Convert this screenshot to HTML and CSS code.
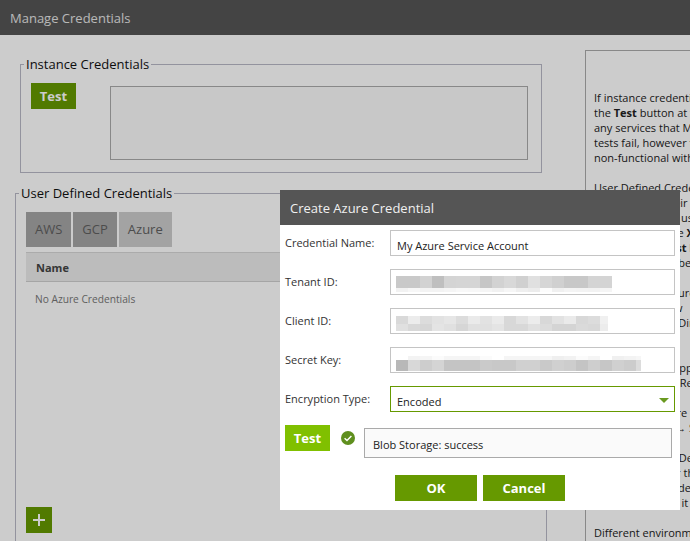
FILE: index.html
```html
<!DOCTYPE html>
<html lang="en">
<head>
<meta charset="utf-8">
<title>Manage Credentials</title>
<link rel="stylesheet" href="styles.css">
</head>
<body>
<header class="page-header">Manage Credentials</header>
<main class="page-main">
  <div class="left-col">
    <fieldset class="group group-instance">
      <legend>Instance Credentials</legend>
      <div class="instance-row">
        <button class="btn btn-test">Test</button>
        <div class="result-box"></div>
      </div>
    </fieldset>
    <fieldset class="group group-user">
      <legend>User Defined Credentials</legend>
      <div class="tabs">
        <div class="tab">AWS</div>
        <div class="tab">GCP</div>
        <div class="tab tab-active">Azure</div>
      </div>
      <div class="table-head">Name</div>
      <div class="table-empty">No Azure Credentials</div>
      <button class="btn btn-add" aria-label="Add">
        <svg width="12" height="12" viewBox="0 0 12 12"><path d="M5 0h2v5h5v2H7v5H5V7H0V5h5z" fill="#fff"/></svg>
      </button>
    </fieldset>
  </div>
  <aside class="help">
    <p>If instance credentials are present, click<br>the <b>Test</b> button at the top to verify them for<br>any services that Matillion uses. If these<br>tests fail, however the product may be<br>non-functional without further setup.</p>
    <p>User Defined Credentials<br>You may add their own keys<br>own keys in jobs use<br>To delete, tap the <b>X</b> icon<br>Then use the <b>Test</b> button<br>Credential's can be saved</p>
    <p>For more, configure it<br>these steps show<br>Via Azure Active Directory</p>
    <p>&nbsp;<br>Now select the App<br>then choose the Required</p>
    <p>Then do configure the<br>A Project menu → Select</p>
    <p>Pleases, use the Default<br>Pleases, set it for the job<br>The credentials, de<br>Chooses, so that it</p>
    <p>Different environments</p>
  </aside>
</main>

<div class="overlay"></div>

<section class="modal">
  <h2 class="modal-title">Create Azure Credential</h2>
  <div class="modal-body">
    <div class="form-row">
      <label class="form-label">Credential Name:</label>
      <div class="field field-text">My Azure Service Account</div>
    </div>
    <div class="form-row">
      <label class="form-label">Tenant ID:</label>
      <div class="field">
        <svg class="mosaic mosaic-tenant" width="216" height="16" shape-rendering="crispEdges">
          <rect x="0" width="12" height="12" fill="#c9c9c9"/><rect x="12" width="12" height="12" fill="#c9c9c9"/><rect x="24" width="12" height="12" fill="#d2d2d2"/><rect x="36" width="12" height="12" fill="#bfbfbf"/><rect x="48" width="12" height="12" fill="#d4d4d4"/><rect x="60" width="12" height="12" fill="#d5d5d5"/><rect x="72" width="12" height="12" fill="#d5d5d5"/><rect x="84" width="12" height="12" fill="#c6c6c6"/><rect x="96" width="12" height="12" fill="#d2d2d2"/><rect x="108" width="12" height="12" fill="#d8d8d8"/><rect x="120" width="12" height="12" fill="#d0d0d0"/><rect x="132" width="12" height="12" fill="#e0e0e0"/><rect x="144" width="12" height="12" fill="#d6d6d6"/><rect x="156" width="12" height="12" fill="#d0d0d0"/><rect x="168" width="12" height="12" fill="#c8c8c8"/><rect x="180" width="12" height="12" fill="#c8c8c8"/><rect x="192" width="12" height="12" fill="#d4d4d4"/><rect x="204" width="12" height="12" fill="#d4d4d4"/>
          <rect x="0" y="12" width="12" height="4" fill="#f2f2f2"/><rect x="12" y="12" width="12" height="4" fill="#f7f7f7"/><rect x="24" y="12" width="12" height="4" fill="#f3f3f3"/><rect x="36" y="12" width="12" height="4" fill="#f3f3f3"/><rect x="48" y="12" width="12" height="4" fill="#f5f5f5"/><rect x="60" y="12" width="12" height="4" fill="#f8f8f8"/><rect x="72" y="12" width="12" height="4" fill="#f7f7f7"/><rect x="84" y="12" width="12" height="4" fill="#f5f5f5"/><rect x="96" y="12" width="12" height="4" fill="#f1f1f1"/><rect x="108" y="12" width="12" height="4" fill="#f6f6f6"/><rect x="120" y="12" width="12" height="4" fill="#efefef"/><rect x="132" y="12" width="12" height="4" fill="#ececec"/><rect x="144" y="12" width="12" height="4" fill="#fcfcfc"/><rect x="156" y="12" width="12" height="4" fill="#f0f0f0"/><rect x="168" y="12" width="12" height="4" fill="#f4f4f4"/><rect x="180" y="12" width="12" height="4" fill="#f3f3f3"/><rect x="192" y="12" width="12" height="4" fill="#f2f2f2"/><rect x="204" y="12" width="12" height="4" fill="#f5f5f5"/>
        </svg>
      </div>
    </div>
    <div class="form-row">
      <label class="form-label">Client ID:</label>
      <div class="field">
        <svg class="mosaic mosaic-client" width="212" height="15" shape-rendering="crispEdges">
          <rect x="0" width="12" height="8" fill="#d9d9d9"/><rect x="12" width="12" height="8" fill="#ececec"/><rect x="24" width="12" height="8" fill="#dcdcdc"/><rect x="36" width="12" height="8" fill="#e2e2e2"/><rect x="48" width="12" height="8" fill="#e6e6e6"/><rect x="60" width="12" height="8" fill="#dcdcdc"/><rect x="72" width="12" height="8" fill="#eaeaea"/><rect x="84" width="12" height="8" fill="#e2e2e2"/><rect x="96" width="12" height="8" fill="#eaeaea"/><rect x="108" width="12" height="8" fill="#d8d8d8"/><rect x="120" width="12" height="8" fill="#e2e2e2"/><rect x="132" width="12" height="8" fill="#ececec"/><rect x="144" width="12" height="8" fill="#d8d8d8"/><rect x="156" width="12" height="8" fill="#e2e2e2"/><rect x="168" width="12" height="8" fill="#eaeaea"/><rect x="180" width="12" height="8" fill="#d8d8d8"/><rect x="192" width="12" height="8" fill="#dcdcdc"/><rect x="204" width="8" height="8" fill="#f0f0f0"/>
          <rect x="0" y="8" width="12" height="7" fill="#e0e0e0"/><rect x="12" y="8" width="12" height="7" fill="#d8d8d8"/><rect x="24" y="8" width="12" height="7" fill="#d6d6d6"/><rect x="36" y="8" width="12" height="7" fill="#e4e4e4"/><rect x="48" y="8" width="12" height="7" fill="#e0e0e0"/><rect x="60" y="8" width="12" height="7" fill="#d6d6d6"/><rect x="72" y="8" width="12" height="7" fill="#e0e0e0"/><rect x="84" y="8" width="12" height="7" fill="#e0e0e0"/><rect x="96" y="8" width="12" height="7" fill="#e4e4e4"/><rect x="108" y="8" width="12" height="7" fill="#d8d8d8"/><rect x="120" y="8" width="12" height="7" fill="#d8d8d8"/><rect x="132" y="8" width="12" height="7" fill="#e0e0e0"/><rect x="144" y="8" width="12" height="7" fill="#dcdcdc"/><rect x="156" y="8" width="12" height="7" fill="#d4d4d4"/><rect x="168" y="8" width="12" height="7" fill="#d4d4d4"/><rect x="180" y="8" width="12" height="7" fill="#dadada"/><rect x="192" y="8" width="12" height="7" fill="#d8d8d8"/><rect x="204" y="8" width="8" height="7" fill="#ececec"/>
        </svg>
      </div>
    </div>
    <div class="form-row">
      <label class="form-label">Secret Key:</label>
      <div class="field">
        <svg class="mosaic mosaic-secret" width="245" height="15" shape-rendering="crispEdges">
          <rect x="12" width="12" height="4" fill="#f3f3f3"/><rect x="24" width="12" height="4" fill="#f5f5f5"/><rect x="36" width="12" height="4" fill="#fbfbfb"/><rect x="48" width="12" height="4" fill="#f5f5f5"/><rect x="60" width="12" height="4" fill="#f5f5f5"/><rect x="72" width="12" height="4" fill="#f5f5f5"/><rect x="84" width="12" height="4" fill="#fbfbfb"/><rect x="108" width="12" height="4" fill="#f5f5f5"/><rect x="120" width="12" height="4" fill="#f5f5f5"/><rect x="132" width="12" height="4" fill="#f5f5f5"/><rect x="144" width="12" height="4" fill="#f6f6f6"/><rect x="156" width="12" height="4" fill="#efefef"/><rect x="168" width="12" height="4" fill="#f2f2f2"/><rect x="180" width="12" height="4" fill="#fbfbfb"/><rect x="192" width="12" height="4" fill="#f5f5f5"/><rect x="216" width="12" height="4" fill="#f0f0f0"/><rect x="228" width="12" height="4" fill="#f3f3f3"/><rect x="240" width="5" height="4" fill="#f6f6f6"/>
          <rect x="0" y="4" width="12" height="11" fill="#b8b8b8"/><rect x="12" y="4" width="12" height="11" fill="#d8d8d8"/><rect x="24" y="4" width="12" height="11" fill="#cdcdcd"/><rect x="36" y="4" width="12" height="11" fill="#d4d4d4"/><rect x="48" y="4" width="12" height="11" fill="#c4c4c4"/><rect x="60" y="4" width="12" height="11" fill="#c4c4c4"/><rect x="72" y="4" width="12" height="11" fill="#c4c4c4"/><rect x="84" y="4" width="12" height="11" fill="#cacaca"/><rect x="96" y="4" width="12" height="11" fill="#c8c8c8"/><rect x="108" y="4" width="12" height="11" fill="#c8c8c8"/><rect x="120" y="4" width="12" height="11" fill="#d0d0d0"/><rect x="132" y="4" width="12" height="11" fill="#d0d0d0"/><rect x="144" y="4" width="12" height="11" fill="#c9c9c9"/><rect x="156" y="4" width="12" height="11" fill="#d0d0d0"/><rect x="168" y="4" width="12" height="11" fill="#cdcdcd"/><rect x="180" y="4" width="12" height="11" fill="#c4c4c4"/><rect x="192" y="4" width="12" height="11" fill="#cecece"/><rect x="204" y="4" width="12" height="11" fill="#c6c6c6"/><rect x="216" y="4" width="12" height="11" fill="#d0d0d0"/><rect x="228" y="4" width="12" height="11" fill="#cccccc"/><rect x="240" y="4" width="5" height="11" fill="#dcdcdc"/>
        </svg>
      </div>
    </div>
    <div class="form-row">
      <label class="form-label">Encryption Type:</label>
      <div class="field field-text field-select">Encoded<span class="caret"></span></div>
    </div>
    <div class="test-row">
      <button class="btn btn-test btn-test-live">Test</button>
      <svg class="check" width="14" height="14" viewBox="0 0 14 14">
        <circle cx="7" cy="7" r="7" fill="#5f8f1e"/>
        <path d="M3.6 7.2l2.4 2.4 4.4-4.6" fill="none" stroke="#fff" stroke-width="1.4"/>
      </svg>
      <div class="test-result">Blob Storage: success</div>
    </div>
    <div class="actions">
      <button class="btn btn-action">OK</button>
      <button class="btn btn-action">Cancel</button>
    </div>
  </div>
</section>
</body>
</html>
```

FILE: styles.css
```css
* { box-sizing: border-box; }

html, body { height: 100%; }

body {
  margin: 0;
  overflow: hidden;
  background: #fff;
  color: #222;
  font-family: "Open Sans", sans-serif;
  font-size: 11px;
}

.page-header {
  height: 35px;
  padding: 0 10px;
  background: #555;
  color: #e6e6e6;
  font-size: 13px;
  line-height: 36px;
}

.page-main {
  display: flex;
  align-items: flex-start;
  padding-left: 15px;
  height: 506px;
  overflow: hidden;
}

.left-col {
  flex: none;
  width: 532px;
  padding-top: 19px;
}

.group {
  margin: 0;
  min-width: 0;
  border: 1px solid #b8b8c6;
  padding: 0 10px;
}

.group legend {
  padding: 0 2px;
  margin-left: -7px;
  color: #111;
  font-size: 13px;
  line-height: 20px;
}

.group-instance {
  width: 522px;
  height: 119px;
  margin: 0 5px 10px;
}

.instance-row {
  display: flex;
  align-items: flex-start;
  gap: 34px;
  padding-top: 9px;
}

.result-box {
  width: 418px;
  height: 74px;
  margin-top: 3px;
  border: 1px solid #aaa;
  background: #fafafa;
}

.btn {
  border: 0;
  padding: 0;
  background: #690;
  color: #fff;
  font-family: "Open Sans", sans-serif;
  font-weight: 700;
}

.btn-test {
  flex: none;
  width: 45px;
  height: 26px;
  font-size: 13px;
}

.group-user {
  height: 420px;
}

.tabs {
  display: flex;
  gap: 2px;
  padding-top: 9px;
}

.tab {
  height: 35px;
  padding: 0 9px;
  background: #a6a6a6;
  color: #606060;
  font-size: 13px;
  line-height: 35px;
}

.tab-active {
  background: #ccc;
}

.table-head {
  height: 30px;
  margin-top: 5px;
  padding-left: 10px;
  border-top: 1px solid #d6d6d6;
  border-bottom: 1px solid #cfcfcf;
  background: #ebebeb;
  color: #444;
  font-weight: 700;
  line-height: 30px;
}

.table-empty {
  height: 225px;
  padding: 9px 0 0 9px;
  color: #777;
  font-size: 10.2px;
  line-height: 16px;
}

.btn-add {
  display: flex;
  align-items: center;
  justify-content: center;
  width: 26px;
  height: 26px;
}

.help {
  flex: none;
  width: 200px;
  height: 520px;
  margin: 15px 0 0 38px;
  padding: 39px 0 0 8px;
  border: 1px solid #aaa;
  border-right: 0;
  border-bottom: 0;
  color: #222;
  font-size: 11px;
  line-height: 15px;
  white-space: nowrap;
}

.help p { margin: 0 0 15px; }

.overlay {
  position: absolute;
  inset: 0;
  background: rgba(0, 0, 0, 0.2);
}

.modal {
  position: absolute;
  left: 280px;
  top: 190px;
  width: 400px;
  height: 320px;
  background: #fff;
}

.modal-title {
  height: 35px;
  margin: 0;
  padding-left: 10px;
  background: #555;
  color: #f0f0f0;
  font-size: 13px;
  font-weight: 400;
  line-height: 36px;
}

.modal-body {
  padding: 5px 5px 0;
}

.form-row {
  display: flex;
  height: 26px;
  margin-bottom: 13px;
}

.form-label {
  flex: none;
  width: 105px;
  color: #333;
  font-size: 11px;
  line-height: 26px;
}

.field {
  width: 285px;
  height: 26px;
  border: 1px solid #c4c4c4;
}

.field-text {
  padding-left: 6px;
  padding-top: 6px;
  color: #222;
  font-size: 11px;
  line-height: 18px;
}

.field-select {
  display: flex;
  justify-content: space-between;
  border-color: #690;
  padding-right: 5px;
}

.caret {
  width: 0;
  height: 0;
  margin-top: 5px;
  border-left: 5px solid transparent;
  border-right: 5px solid transparent;
  border-top: 5px solid #6a9a20;
}

.mosaic { display: block; margin-left: 5px; }
.mosaic-tenant { margin-top: 6px; }
.mosaic-client { margin-top: 7px; }
.mosaic-secret { margin-top: 8px; }

.test-row {
  display: flex;
  align-items: flex-start;
}

.btn-test-live {
  background: #80c000;
}

.check {
  flex: none;
  margin: 6px 0 0 11px;
}

.test-result {
  width: 308px;
  height: 30px;
  margin: 3px 0 0 9px;
  padding: 8px 0 0 8px;
  border: 1px solid #aaa;
  background: #fafafa;
  color: #222;
  font-size: 11px;
  line-height: 16px;
}

.actions {
  display: flex;
  gap: 6px;
  padding: 17px 0 0 110px;
}

.btn-action {
  width: 82px;
  height: 26px;
  font-size: 13px;
}
```
